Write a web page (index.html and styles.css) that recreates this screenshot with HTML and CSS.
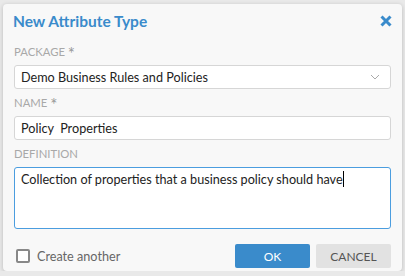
FILE: index.html
```
<!DOCTYPE html>
<html lang="en">
<head>
    <meta charset="UTF-8">
    <title>New Attribute Type</title>
    <link rel="stylesheet" href="styles.css">
</head>
<body>
    <div class="dialog">
        <div class="dialog-header">
            <h1>New Attribute Type</h1>
            <span class="close-btn">
                <svg width="12" height="12" viewBox="0 0 12 12">
                    <path d="M1.5 1.5 L10.5 10.5 M10.5 1.5 L1.5 10.5" stroke="#3a8bcb" stroke-width="3"/>
                </svg>
            </span>
        </div>

        <div class="field">
            <label>PACKAGE <span class="req">*</span></label>
            <div class="input select">
                <span>Demo Business Rules and Policies</span>
                <svg class="chevron" width="10" height="6" viewBox="0 0 10 6">
                    <path d="M1 1 L5 5 L9 1" fill="none" stroke="#aaa" stroke-width="1"/>
                </svg>
            </div>
        </div>

        <div class="field">
            <label>NAME <span class="req">*</span></label>
            <div class="input">Policy&nbsp; Properties</div>
        </div>

        <div class="field">
            <label>DEFINITION</label>
            <div class="input textarea">Collection of properties that a business policy should have<span class="caret"></span></div>
        </div>

        <div class="dialog-footer">
            <label class="check">
                <span class="box"></span>
                Create another
            </label>
            <div class="buttons">
                <button class="btn btn-primary">OK</button>
                <button class="btn btn-default">CANCEL</button>
            </div>
        </div>
    </div>
</body>
</html>
```

FILE: styles.css
```
body {
    margin: 0;
    background: #e9e9e9;
    font-family: Lato, "Liberation Sans", sans-serif;
}
.dialog {
    margin: 4px 3px 0 3px;
    width: 399px;
    height: 267px;
    box-sizing: border-box;
    padding: 4px 11px 3px 11px;
    background: #f8f8f8;
    border-radius: 4px;
    box-shadow: 0 1px 4px rgba(0,0,0,0.2);
    display: flex;
    flex-direction: column;
}
.dialog-header {
    display: flex;
    align-items: center;
    justify-content: space-between;
    height: 26px;
    margin-bottom: 10px;
}
.dialog-header h1 {
    margin: 0 0 0 -1px;
    font-size: 15.5px;
    font-weight: bold;
    color: #3a8bcb;
}
.close-btn {
    display: flex;
    margin-right: -1px;
}
.field {
    margin-bottom: 6px;
}
.field label {
    display: block;
    font-size: 11.3px;
    line-height: 16px;
    color: #a8a8a8;
    margin-bottom: 5px;
}
.req {
    color: #999;
    font-size: 17px;
    line-height: 10px;
    vertical-align: -4px;
}
.input {
    height: 24px;
    box-sizing: border-box;
    border: 1px solid #d6d6d6;
    border-radius: 3px;
    background: #fff;
    padding: 0 6px;
    font-size: 12.65px;
    line-height: 23px;
    color: #222;
}
.select {
    display: flex;
    align-items: center;
    justify-content: space-between;
}
.chevron {
    margin-right: 4px;
}
.textarea {
    height: 62px;
    border-color: #4b9ddf;
    line-height: 20px;
    padding-top: 2px;
}
.caret {
    display: inline-block;
    width: 1px;
    height: 16px;
    background: #000;
    vertical-align: -3px;
}
.dialog-footer {
    margin-top: auto;
    display: flex;
    align-items: center;
    justify-content: space-between;
}
.check {
    display: flex;
    align-items: center;
    gap: 7px;
    font-size: 12.65px;
    color: #666;
    margin-left: 2px;
}
.box {
    width: 10px;
    height: 10px;
    border: 2px solid #888;
    border-radius: 2px;
    background: #fff;
}
.buttons {
    display: flex;
    gap: 6px;
}
.btn {
    width: 75px;
    height: 24px;
    border: none;
    border-radius: 2px;
    font-family: inherit;
    font-size: 12px;
}
.btn-primary {
    background: #3a8bcb;
    color: #fff;
}
.btn-default {
    background: #e2e2e2;
    color: #555;
}
```
